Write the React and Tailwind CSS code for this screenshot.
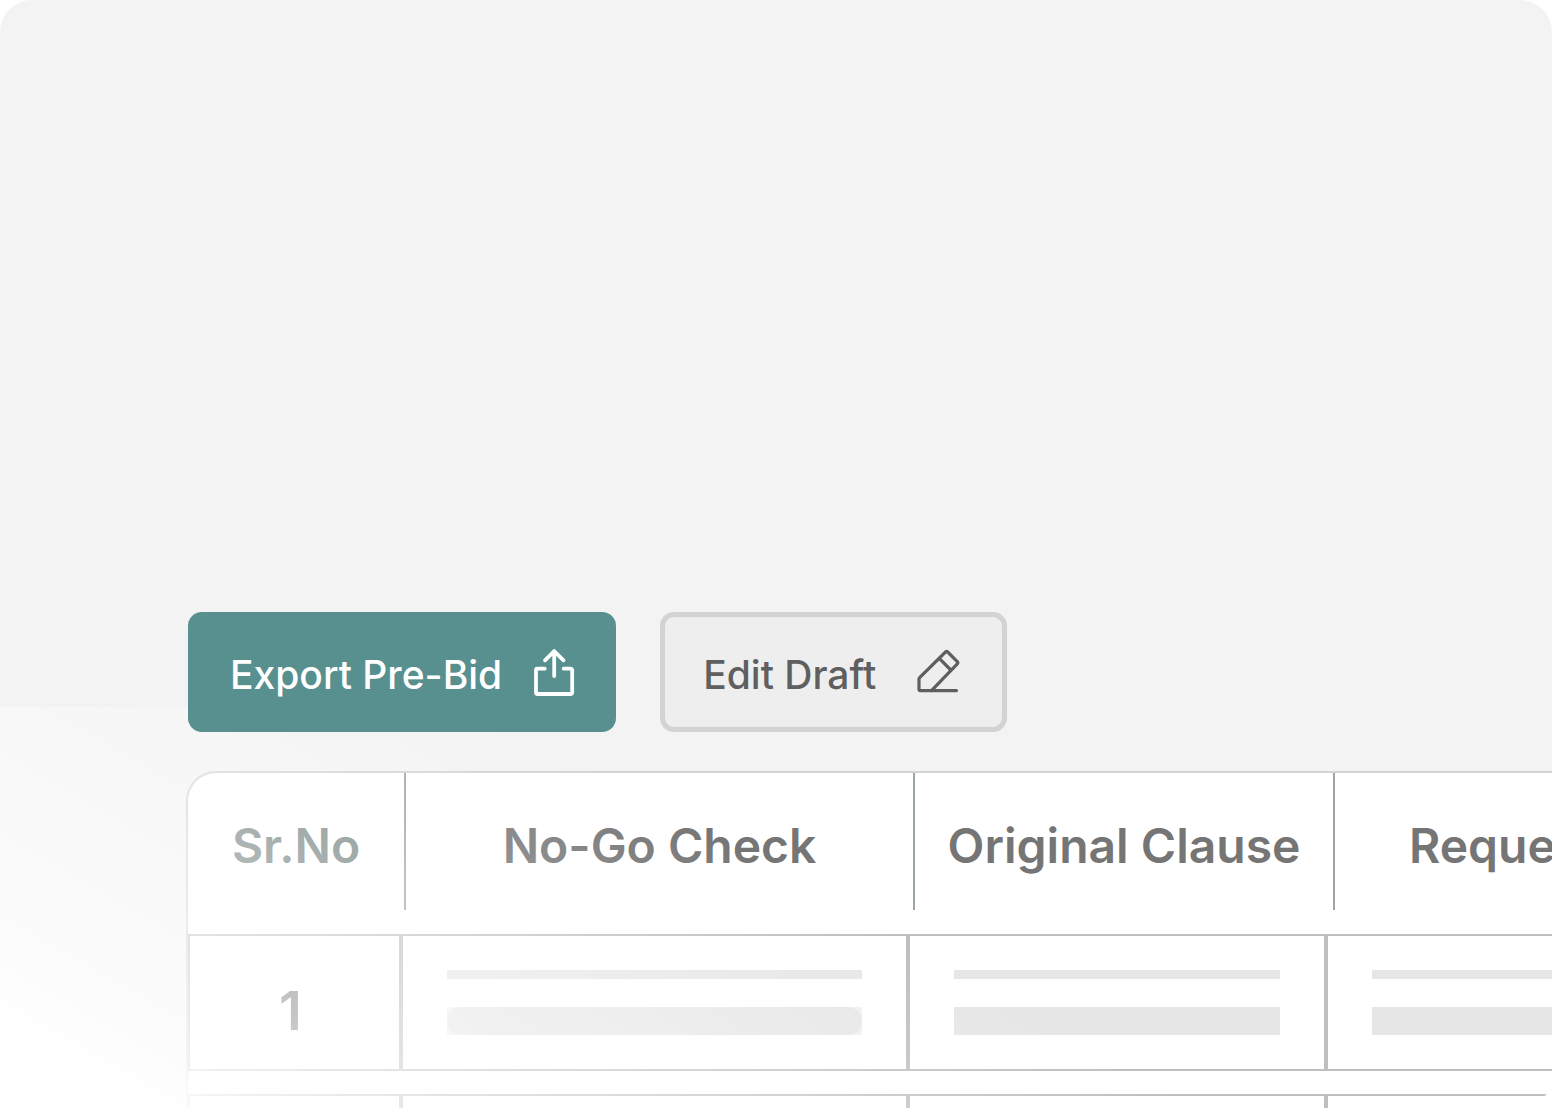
import clsx from "clsx";

const columns = [
  { label: "Sr.No", head: "w-[218px] justify-center text-[#748380]", cell: "w-[213px]" },
  { label: "No-Go Check", head: "w-[509px] justify-center text-[#757575]", cell: "w-[507px] px-11" },
  { label: "Original Clause", head: "w-[420px] justify-center text-[#757575]", cell: "w-[418px] px-11" },
  { label: "Reque", head: "flex-1 pl-[74px] text-[#757575]", cell: "flex-1 pl-11" },
];

const rows = [
  { id: "first", number: 1 },
  { id: "second", number: null },
];

function ShareIcon() {
  return (
    <svg
      className="size-12 shrink-0"
      viewBox="0 0 48 48"
      fill="none"
      stroke="currentColor"
      strokeWidth="3.8"
      strokeLinecap="round"
      strokeLinejoin="round"
      aria-hidden="true"
    >
      <path d="M14.7 20.7H7.5a1.5 1.5 0 0 0-1.5 1.5v22.3A1.5 1.5 0 0 0 7.5 46h33.2a1.5 1.5 0 0 0 1.5-1.5V22.2a1.5 1.5 0 0 0-1.5-1.5h-7" />
      <path d="M24.2 28V3.5M15 12.3l9.2-9.2 9.3 9.2" />
    </svg>
  );
}

function PencilIcon() {
  return (
    <svg
      className="size-12 shrink-0"
      viewBox="0 0 48 48"
      fill="none"
      stroke="currentColor"
      strokeWidth="3.2"
      strokeLinecap="round"
      strokeLinejoin="round"
      aria-hidden="true"
    >
      <path d="M17.5 42.6H6.3a1.3 1.3 0 0 1-1.3-1.3V31a2 2 0 0 1 .6-1.4L31.5 4a1.6 1.6 0 0 1 2.2 0l9.6 9.6a1.6 1.6 0 0 1 0 2.2L17.5 42.6Z" />
      <path d="M17.5 42.6h25M25.5 10.6l11.3 11.4" />
    </svg>
  );
}

function Placeholder({ rounded }) {
  return (
    <div className="flex w-full flex-col gap-7">
      <div className="h-[9px] bg-[#e6e6e6]" />
      <div className={clsx("h-7", rounded ? "bg-[#f0f0f0]" : "bg-[#e6e6e6]")}>
        {rounded && <div className="h-full rounded-full bg-[#e6e6e6]" />}
      </div>
    </div>
  );
}

function ClauseTable() {
  return (
    <table className="block rounded-tl-[30px] border-t-2 border-l-2 border-[#d4d4d4] bg-white">
      <thead className="block">
        <tr className="flex h-[161px] pb-6">
          {columns.map((col, i) => (
            <th
              key={col.label}
              scope="col"
              className={clsx(
                "flex shrink-0 items-center pt-2 text-5xl font-semibold whitespace-nowrap",
                i < columns.length - 1 && "border-r-2 border-[#9ca6a4]",
                col.head
              )}
            >
              {col.label}
            </th>
          ))}
        </tr>
      </thead>
      <tbody className="flex flex-col gap-[23px]">
        {rows.map((row) => (
          <tr key={row.id} className="flex h-[137px] border-y-2 border-l-2 border-[#bfbfbf]">
            {columns.map((col, i) => (
              <td
                key={col.label}
                className={clsx(
                  "flex shrink-0 border-[#bfbfbf]",
                  i < columns.length - 1 && "border-r-4",
                  i === 0
                    ? "items-center justify-center pt-4 pr-2 text-[54px] leading-none font-semibold text-[#757575]"
                    : "items-start pt-[34px]",
                  col.cell
                )}
              >
                {i === 0 ? row.number : <Placeholder rounded={i === 1} />}
              </td>
            ))}
          </tr>
        ))}
      </tbody>
    </table>
  );
}

export default function App() {
  return (
    <div className="bg-white font-['Inter',sans-serif]">
      <main className="relative h-screen overflow-hidden rounded-[32px] bg-[#f3f3f3] pt-[612px]">
        <div className="relative z-10 flex gap-11 pl-[188px] text-[39px] leading-none font-medium">
          <button
            type="button"
            className="flex h-[120px] items-center gap-7 rounded-[14px] bg-[#57908f] pr-[38px] pl-[42px] text-white"
          >
            <span className="pt-1">Export Pre-Bid</span>
            <ShareIcon />
          </button>
          <button
            type="button"
            className="flex h-[120px] items-center gap-[38px] rounded-[14px] border-[5px] border-[#d3d3d3] bg-[#eeeeee] pr-10 pl-[38px] text-[#5f5f5f]"
          >
            <span className="pt-1">Edit Draft</span>
            <PencilIcon />
          </button>
        </div>
        <div className="mt-[39px] pl-[186px]">
          <ClauseTable />
        </div>
        {/* white haze that rises from the bottom left corner */}
        <div className="pointer-events-none absolute inset-x-0 bottom-0 h-[401px] bg-[linear-gradient(30deg,#fff_70px,rgba(255,255,255,0.78)_130px,rgba(255,255,255,0.58)_229px,rgba(255,255,255,0.36)_375px,rgba(255,255,255,0.18)_482px,rgba(255,255,255,0)_597px)]" />
      </main>
    </div>
  );
}
